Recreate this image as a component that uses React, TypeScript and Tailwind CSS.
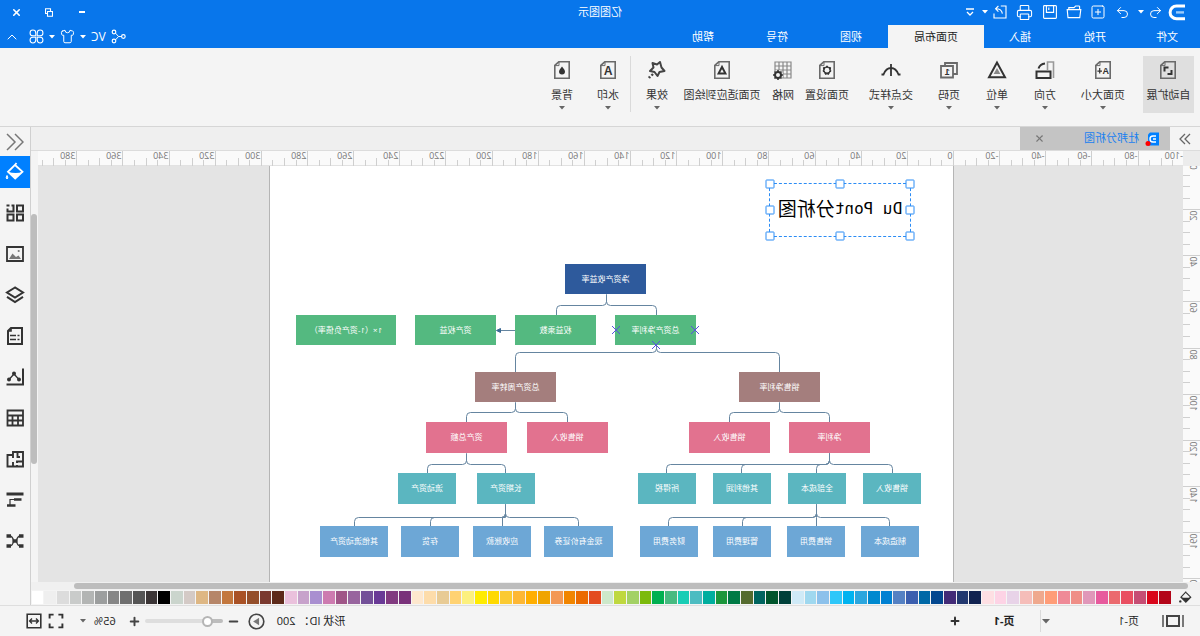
import type { ReactNode } from "react";
import { ChevronUp, Minus, Plus, Printer, Redo2, Shirt, SquarePlus, Undo2, X } from "lucide-react";

type IconProps = { size?: number; className?: string; children: ReactNode };

function Icon({ size = 20, className = "", children }: IconProps) {
  return (
    <svg
      width={size}
      height={size}
      viewBox="0 0 20 20"
      fill="none"
      stroke="currentColor"
      strokeWidth={1.6}
      className={className}
      aria-hidden="true"
    >
      {children}
    </svg>
  );
}

function Caret({ className = "" }: { className?: string }) {
  return (
    <svg width="6" height="4" viewBox="0 0 6 4" className={className} aria-hidden="true">
      <path d="M0 0H6L3 3.6Z" fill="currentColor" />
    </svg>
  );
}

function PageIcon({ children }: { children: ReactNode }) {
  return (
    <Icon className="text-[#6a6a6a]">
      <path d="M2.8 1.8H13.2L17.2 5.4V18.2H2.8Z" />
      <path d="M13 2V5.6H17" strokeWidth={1} />
      <g className="text-[#333]" stroke="currentColor">
        {children}
      </g>
    </Icon>
  );
}

const gear = "M10 5.8L11.4 7.3L13.6 7.6L13.4 9.8L14 11.2L12.4 12.6L11.6 14.4L10 13.8L8.4 14.4L7.6 12.6L6 11.2L6.6 9.8L6.4 7.6L8.6 7.3Z";

type Tool = { label: string; width: string; icon: ReactNode; menu?: boolean; active?: boolean };

const pageTools: Tool[] = [
  {
    label: "自动扩展",
    width: "w-[51px] mr-1.5",
    active: true,
    icon: (
      <PageIcon>
        <path d="M9.5 7.5H13.5V11.5M10.5 14H6.5V10" strokeWidth={2} />
      </PageIcon>
    ),
  },
  {
    label: "页面大小",
    width: "w-[68px]",
    menu: true,
    icon: (
      <PageIcon>
        <text x="4" y="14" fontSize="9" fontWeight="700" fontFamily="Liberation Sans" fill="currentColor" stroke="none">A</text>
        <path d="M13.3 8V13.5M11 11.2H15.6" strokeWidth={1.2} />
      </PageIcon>
    ),
  },
  {
    label: "方向",
    width: "w-12",
    menu: true,
    icon: (
      <Icon className="text-[#333]">
        <path d="M1.5 18V2H7.5V10" className="text-[#999]" stroke="currentColor" />
        <path d="M4.5 11.5H18.5V18H4.5Z" strokeWidth={2} />
        <path d="M10 3.5Q15 4 16.5 8.5" strokeWidth={2} />
      </Icon>
    ),
  },
  {
    label: "单位",
    width: "w-12",
    menu: true,
    icon: (
      <Icon className="text-[#333]">
        <path d="M10 2.5L18 17.3H2Z" strokeWidth={2} />
        <path d="M10 8L13.4 14H6.6Z" fill="#888" stroke="none" />
      </Icon>
    ),
  },
  {
    label: "页码",
    width: "w-12",
    menu: true,
    icon: (
      <Icon className="text-[#6a6a6a]">
        <path d="M6 14H2V3H14V6" strokeWidth={1.8} />
        <path d="M6 6H18V17.5H6Z" strokeWidth={1.8} />
        <text x="9.3" y="15" fontSize="9" fontWeight="700" fontFamily="Liberation Sans" fill="#333" stroke="none">1</text>
      </Icon>
    ),
  },
  {
    label: "交点样式",
    width: "w-[68px]",
    menu: true,
    icon: (
      <Icon className="text-[#333]">
        <path d="M0.5 14.5H2.5Q5 8 10 8Q15 8 17.5 14.5H19.5M10 4V16" strokeWidth={1.8} />
      </Icon>
    ),
  },
  {
    label: "页面设置",
    width: "w-[60px]",
    icon: (
      <PageIcon>
        <path d={gear} fill="currentColor" strokeWidth={1} />
        <circle cx="10" cy="10.2" r="2.4" fill="#f4f4f4" stroke="none" />
      </PageIcon>
    ),
  },
  {
    label: "网格",
    width: "w-7",
    icon: (
      <Icon className="text-[#888]">
        <path d="M2 2H18V18H2ZM2 6H18M2 10H18M2 14H18M6 2V18M10 2V18M14 2V18" strokeWidth={1.2} />
        <circle cx="15" cy="15" r="5" fill="#f4f4f4" stroke="none" />
        <circle cx="15" cy="15" r="3" stroke="#333" strokeWidth={2} />
        <path d="M15 10V12M15 18V20M10 15H12M18 15H20M11.5 11.5L13 13M17 17L18.5 18.5M18.5 11.5L17 13M11.5 18.5L13 17" stroke="#333" strokeWidth={1.6} />
      </Icon>
    ),
  },
  {
    label: "页面适应到绘图",
    width: "w-[94px]",
    icon: (
      <PageIcon>
        <path d="M10 7L13.4 13.4H6.6Z" strokeWidth={2} />
      </PageIcon>
    ),
  },
  {
    label: "效果",
    width: "w-9",
    menu: true,
    icon: (
      <Icon className="text-[#444]">
        <path d="M7 2L10 4.5L14.5 3L13.5 7.5L17 11L12.5 12L9.5 16L7.5 12L2.5 11L5.5 7.5Z" strokeWidth={2} strokeLinejoin="round" />
        <path d="M14 14L15.5 15.5M17 16.5L18 18" strokeWidth={2.4} />
      </Icon>
    ),
  },
];

const backgroundTools: Tool[] = [
  {
    label: "水印",
    width: "w-11",
    menu: true,
    icon: (
      <PageIcon>
        <text x="5.4" y="14.6" fontSize="12" fontWeight="700" fontFamily="Liberation Sans" fill="currentColor" stroke="none">A</text>
      </PageIcon>
    ),
  },
  {
    label: "背景",
    width: "w-12",
    menu: true,
    icon: (
      <PageIcon>
        <path d="M10 6.5Q13 10 13 11.6A3 3 0 0 1 7 11.6Q7 10 10 6.5Z" fill="currentColor" stroke="none" />
      </PageIcon>
    ),
  },
];

function ToolButton({ tool }: { tool: Tool }) {
  return (
    <button
      className={`flex h-[57px] shrink-0 flex-col items-center pt-1 text-[11px] leading-4 whitespace-nowrap text-[#333] ${tool.width} ${
        tool.active ? "bg-[#dfdfdf]" : ""
      }`}
    >
      {tool.icon}
      <span className="mt-[7px]">{tool.label}</span>
      {tool.menu && <Caret className="mt-[3px] shrink-0 text-[#666]" />}
    </button>
  );
}

const menuTabs = [
  { label: "文件", width: "w-[66px]" },
  { label: "开始", width: "w-[78px]" },
  { label: "插入", width: "w-[72px]" },
  { label: "页面布局", width: "w-24", active: true },
  { label: "视图", width: "w-[74px]" },
  { label: "符号", width: "w-[74px]" },
  { label: "帮助", width: "w-[74px]" },
];

function Header() {
  return (
    <header className="shrink-0 bg-[#0876eb] text-[11px] text-white">
      <div className="flex h-[25px] items-center pb-px">
        <div className="flex flex-1 items-center">
          <svg width="20" height="18" viewBox="0 0 20 18" fill="none" className="ml-3.5" aria-hidden="true">
            <path d="M1 3H9.5A6.3 6.3 0 0 1 9.5 15.8H1" stroke="white" strokeWidth="3" />
            <path d="M2 9.4H10" stroke="#9ccbfa" strokeWidth="2.4" />
          </svg>
          <button className="flex h-6 w-5 items-center justify-center" aria-label="撤销">
            <Undo2 size={15} strokeWidth={1.6} />
          </button>
          <Caret className="mx-0.5" />
          <button className="flex h-6 w-[26px] items-center justify-center" aria-label="重做">
            <Redo2 size={15} strokeWidth={1.6} />
          </button>
          <button className="flex h-6 w-6 items-center justify-center" aria-label="新建">
            <SquarePlus size={16} strokeWidth={1.5} />
          </button>
          <button className="flex h-6 w-6 items-center justify-center" aria-label="打开">
            <Icon size={16}>
              <path d="M3 7V3.5Q3 2.5 4 2.5H8L10 4.5H16.5V7M1.5 7H18.5L17.5 17H2.8Z" strokeWidth={1.4} />
            </Icon>
          </button>
          <button className="flex h-6 w-6 items-center justify-center" aria-label="保存">
            <Icon size={16}>
              <path d="M3 2H17Q18 2 18 3V17Q18 18 17 18H3Q2 18 2 17V3Q2 2 3 2ZM5.5 2V10.5H14.5V2M11.5 4.5V7.5" strokeWidth={1.4} />
            </Icon>
          </button>
          <button className="flex h-6 w-[26px] items-center justify-center" aria-label="打印">
            <Printer size={17} strokeWidth={1.5} />
          </button>
          <button className="flex h-6 w-6 items-center justify-center" aria-label="导出">
            <Icon size={16}>
              <path d="M9 2.5H2.5V17.5H17.5V12M7 12Q8 6 15 6M12 2.5L15.5 6L12 9.5" strokeWidth={1.4} />
            </Icon>
          </button>
          <Caret />
          <button className="ml-1 flex h-6 w-4 items-center justify-center" aria-label="更多">
            <svg width="8" height="8" viewBox="0 0 8 8" fill="none" stroke="white" aria-hidden="true">
              <path d="M0 1H8M1 4L4 7L7 4" strokeWidth="1.3" />
            </svg>
          </button>
        </div>
        <h1>亿图图示</h1>
        <div className="flex flex-1 items-center justify-end">
          <button className="flex h-6 w-[33px] items-center justify-center" aria-label="最小化">
            <svg width="6" height="2" aria-hidden="true">
              <path d="M0 1H6" stroke="white" strokeWidth="2" />
            </svg>
          </button>
          <button className="flex h-6 w-[33px] items-center justify-center" aria-label="还原">
            <svg width="8" height="9" viewBox="0 0 8 9" fill="none" stroke="white" aria-hidden="true">
              <path d="M2.5 3V0.7H7.5V5.5H5.5M0.5 3.5H5.5V8.3H0.5Z" strokeWidth="1.1" />
            </svg>
          </button>
          <button className="flex h-6 w-[33px] items-center justify-center" aria-label="关闭">
            <X size={11} strokeWidth={3.5} />
          </button>
        </div>
      </div>
      <div className="flex h-[23px] items-center">
        <nav className="flex h-full flex-1">
          {menuTabs.map((tab) => (
            <button
              key={tab.label}
              className={`h-full pt-0.5 ${tab.width} ${tab.active ? "bg-[#f4f4f4] text-[#222]" : "text-white"}`}
            >
              {tab.label}
            </button>
          ))}
        </nav>
        <div className="flex h-full items-center gap-[5px] pr-1">
          <button aria-label="分享">
            <Icon size={15}>
              <circle cx="3.5" cy="10" r="2.4" />
              <circle cx="16" cy="4" r="2.4" />
              <circle cx="16" cy="16" r="2.4" />
              <path d="M6 10H10L14 5.5M10 10L14 14.5" strokeWidth={1.3} />
            </Icon>
          </button>
          <button className="text-xs">VC</button>
          <Caret />
          <button aria-label="皮肤">
            <Shirt size={15} strokeWidth={1.6} />
          </button>
          <Caret />
          <button aria-label="应用">
            <Icon size={15}>
              <path
                d="M9 9H5.2A3.8 3.8 0 1 1 9 5.2ZM11 9V5.2A3.8 3.8 0 1 1 14.8 9ZM9 11V14.8A3.8 3.8 0 1 1 5.2 11ZM11 11H14.8A3.8 3.8 0 1 1 11 14.8Z"
                strokeWidth={1.4}
              />
            </Icon>
          </button>
          <button className="ml-1" aria-label="收起">
            <ChevronUp size={16} strokeWidth={1.5} />
          </button>
        </div>
      </div>
    </header>
  );
}

const majorStep = 46.14; // pixels per 20 mm at 65% zoom

function HorizontalRuler() {
  const ticks = Array.from({ length: 99 }, (_, i) => i - 19);
  return (
    <svg className="h-[15px] min-w-0 flex-1 overflow-visible bg-[#fafafa]" aria-hidden="true">
      <line x1="0" y1="14.5" x2="100%" y2="14.5" stroke="#e2e2e2" />
      <text x="0" y="8" fontSize="9" fill="#777">
        -100
      </text>
      {ticks.map((t) => {
        const x = Math.round(229 + (t * majorStep) / 4) + 0.5;
        const major = t % 4 === 0;
        return (
          <g key={t}>
            <path d={`M${x} ${major ? 0 : t % 2 === 0 ? 7 : 9}V15`} stroke="#cfcfcf" />
            {major && (
              <text x={x + 1} y="8" fontSize="9" fill="#777">
                {t * 5}
              </text>
            )}
          </g>
        );
      })}
    </svg>
  );
}

function VerticalRuler() {
  const ticks = Array.from({ length: 37 }, (_, i) => i);
  return (
    <svg className="h-full w-[17px] shrink-0 bg-[#fafafa]" aria-hidden="true">
      {ticks.map((t) => {
        const y = Math.round(-3 + (t * majorStep) / 4) + 0.5;
        const major = t % 4 === 0;
        return (
          <g key={t}>
            <path d={`M${major ? 0 : 10} ${y}H17`} stroke="#cfcfcf" />
            {major && (
              <text
                x="10"
                y={y + 1}
                fontSize="9"
                fill="#777"
                textAnchor="end"
                transform={`rotate(-90 10 ${y + 1})`}
              >
                {t * 5}
              </text>
            )}
          </g>
        );
      })}
    </svg>
  );
}

type DiagramNode = { text: string; x: number; y: number; w: number; h: number; color: string };

const row = (
  y: number,
  w: number,
  h: number,
  color: string,
  items: [string, number, number?][],
): DiagramNode[] => items.map(([text, x, width]) => ({ text, x, y, w: width ?? w, h, color }));

const nodes: DiagramNode[] = [
  ...row(98, 81, 30, "#2e5a9c", [["净资产收益率", 307]]),
  ...row(149, 81, 30, "#54b980", [
    ["总资产净利率", 257],
    ["权益乘数", 357],
    ["资产权益", 457],
    ["1×（1-资产负债率）", 557, 100],
  ]),
  ...row(206, 81, 30, "#a47e7d", [
    ["销售净利率", 133],
    ["总资产周转率", 397],
  ]),
  ...row(256, 81, 31, "#e2728f", [
    ["净利率", 83],
    ["销售收入", 183],
    ["销售收入", 345],
    ["资产总额", 446],
  ]),
  ...row(307, 58, 31, "#5bb6c0", [
    ["销售收入", 32],
    ["全部成本", 107],
    ["其他利润", 182],
    ["所得税", 257],
    ["长期资产", 418],
    ["流动资产", 497],
  ]),
  ...row(360, 58, 31, "#6da7d6", [
    ["制造成本", 34],
    ["销售费用", 108],
    ["管理费用", 182],
    ["财务费用", 255],
    ["现金有价证券", 340, 69],
    ["应收账款", 422],
    ["存货", 494],
    ["其他流动资产", 565, 68],
  ]),
];

// [parent x, parent bottom, line y, child top, child xs]
const branches: [number, number, number, number, number[]][] = [
  [347, 128, 139, 149, [297, 397]],
  [297, 179, 186, 206, [174, 438]],
  [174, 236, 246, 256, [124, 224]],
  [438, 236, 246, 256, [386, 487]],
  [124, 287, 298, 307, [61, 137, 212, 287]],
  [487, 287, 298, 307, [448, 526]],
  [137, 338, 351, 360, [64, 137, 211, 285]],
  [448, 338, 351, 360, [375, 451, 523, 599]],
];

function branchPath(x: number, y0: number, mid: number, y1: number, cx: number) {
  if (Math.abs(cx - x) < 8) return `M${x} ${y0}V${mid}L${cx} ${mid}V${y1}`;
  const dir = cx > x ? 1 : -1;
  return `M${x} ${y0}V${mid - 4}Q${x} ${mid} ${x + 4 * dir} ${mid}H${cx - 4 * dir}Q${cx} ${mid} ${cx} ${mid + 4}V${y1}`;
}

const handles: [number, number][] = [
  [0, 0],
  [50, 0],
  [100, 0],
  [0, 50],
  [100, 50],
  [0, 100],
  [50, 100],
  [100, 100],
];

function DrawingPage() {
  return (
    <div className="relative ml-[229px] h-full w-[685px] shrink-0 overflow-hidden border-x border-[#b5b5b5] bg-white">
      <svg className="absolute inset-0 h-full w-full" fill="none" stroke="#6585a0" aria-hidden="true">
        <g transform="translate(-0.5 0.5)">
          {branches.map(([x, y0, mid, y1, children]) =>
            children.map((cx) => <path key={`${x}-${y0}-${cx}`} d={branchPath(x, y0, mid, y1, cx)} />),
          )}
          <path d="M438 164H454" />
          <path d="M453 162L457 164L453 166Z" fill="#3c6a94" stroke="#3c6a94" />
        </g>
      </svg>
      {nodes.map((n) => (
        <div
          key={`${n.x}-${n.y}`}
          className="absolute flex items-center justify-center pb-px text-[8px] leading-none whitespace-nowrap text-white"
          style={{ left: n.x, top: n.y, width: n.w, height: n.h, backgroundColor: n.color }}
        >
          {n.text}
        </div>
      ))}
      <svg className="absolute inset-0 h-full w-full" stroke="#5a50e0" aria-hidden="true">
        {[
          [258, 164],
          [337, 164],
          [297, 179],
        ].map(([x, y]) => (
          <path key={x} d={`M${x - 4} ${y - 4}l8 8m0 -8l-8 8`} />
        ))}
      </svg>
      <div className="absolute top-[17px] left-[42px] flex h-[54px] w-[142px] items-center justify-center border border-dashed border-[#2b8cf5] pb-0.5 text-[19px] leading-none whitespace-nowrap text-black">
        <span className="font-['DejaVu_Sans_Mono','Noto_Sans_CJK_SC',monospace] text-base leading-none">Du Pont</span>
        <span>分析图</span>
        {handles.map(([x, y]) => (
          <span
            key={`${x}-${y}`}
            className="absolute h-[9px] w-[9px] -translate-x-1/2 -translate-y-1/2 rounded-[1px] border border-[#2b8cf5] bg-white"
            style={{ left: `${x}%`, top: `${y}%` }}
          />
        ))}
      </div>
    </div>
  );
}

const palette = [
  "#b30518", "#d9061b", "#c64e74", "#e94f61", "#eb6a6e", "#e75a9d", "#e097b9", "#ef8e87", "#ef8a97", "#ff9d78",
  "#efa98e", "#f5bdb9", "#e8d3e8", "#fdd3e5", "#fedfe3", "#102250", "#22386f", "#432b77", "#03478f", "#0068a6",
  "#3b5eae", "#5581c3", "#0080d2", "#0089cf", "#2ba6de", "#00b3f0", "#2ec7f9", "#8cc1eb", "#9fd8ef", "#cfeaf7",
  "#00403a", "#00552c", "#00645f", "#556b2f", "#007a45", "#1b963b", "#00ae9e", "#4dbcc1", "#19cdb5", "#47ba80",
  "#00b051", "#7cba0c", "#a3d165", "#bfd83f", "#cde8ca", "#e34c20", "#eb6a00", "#f18500", "#f39855", "#f0a400",
  "#ffae00", "#fdb735", "#fbca32", "#ffd900", "#ffeb00", "#fcf07e", "#ffd272", "#e8cb95", "#fddcaa", "#fee8ce",
  "#79317a", "#813a80", "#693a96", "#735098", "#98659e", "#a05688", "#cd7bb0", "#a98fd0", "#c7a2cb", "#eac1dc",
  "#5d2a1a", "#7a392f", "#944f2b", "#a95226", "#c3773d", "#b68669", "#deb784", "#d4cac6", "#cbd5cd", "#000000",
  "#3b3536", "#555555", "#6f6f6f", "#868686", "#9c9e9e", "#b3b5b4", "#c9cbca", "#dcdcdc", "#efefef", "#ffffff",
];

function Bucket({ size }: { size: number }) {
  return (
    <Icon size={size}>
      <path d="M9 1L17 9.5L9.5 17L2 9.5L9 2.5" strokeWidth={1.8} />
      <path d="M2 9.5Q9 11.5 17 9.5L9.5 17Z" fill="currentColor" stroke="none" />
      <circle cx="18" cy="16" r="1.8" fill="currentColor" stroke="none" />
    </Icon>
  );
}

const sidePanels: { label: string; icon: ReactNode }[] = [
  {
    label: "填充",
    icon: (
      <Icon>
        <path d="M8.5 1L10 3L17 9.8L9.8 16.5L2.5 9.8L10 3" strokeWidth={1.8} />
        <path d="M2.5 10Q9 12 17 10L9.8 17Z" fill="currentColor" stroke="none" />
        <path d="M18 13.5Q19.5 16 18 17Q16.5 16 18 13.5Z" fill="currentColor" strokeWidth={1} />
      </Icon>
    ),
  },
  {
    label: "符号库",
    icon: (
      <Icon>
        <path d="M2 2.5H8V8.5H2ZM2 11.5H8V17.5H2ZM11.5 11.5H17.5V17.5H11.5ZM13.5 2.5H11.5V8.5H17.5V5.5" strokeWidth={2} />
        <path d="M15.5 2.5H18.5" strokeWidth={2} />
      </Icon>
    ),
  },
  {
    label: "图片",
    icon: (
      <Icon>
        <path d="M2 3H18V17H2Z" strokeWidth={1.8} />
        <path d="M4 15L6.5 11.5L9 13L12.5 9.5L16 15Z" fill="#777" stroke="none" />
        <circle cx="6.3" cy="7" r="1.1" fill="#777" stroke="none" />
      </Icon>
    ),
  },
  {
    label: "图层",
    icon: (
      <Icon>
        <path d="M10 2.5L18 7.5L10 12.5L2 7.5ZM2 11.8L10 17L18 11.8" strokeWidth={2} />
      </Icon>
    ),
  },
  {
    label: "属性",
    icon: (
      <Icon>
        <path d="M3 2H14L17 5V18H3Z" strokeWidth={2} />
        <path d="M5.5 9.5H7.5M9 9.5H15M5.5 13.5H7.5M9 13.5H15M14 2V5H17" strokeWidth={1.6} />
      </Icon>
    ),
  },
  {
    label: "图表",
    icon: (
      <Icon>
        <path d="M2 1.5V17.5H18.5" strokeWidth={2} />
        <path d="M6 12.5L11 7L16 12.5" strokeWidth={1.3} />
        <g fill="currentColor" stroke="none">
          <circle cx="6" cy="12.5" r="2" />
          <circle cx="11" cy="6.5" r="2" />
          <circle cx="16" cy="12.5" r="2" />
        </g>
      </Icon>
    ),
  },
  {
    label: "表格",
    icon: (
      <Icon>
        <path d="M2 2.5H17.5V17.5H2ZM2 7.5H17.5M2 12.5H17.5M7 7.5V17.5M12.5 7.5V17.5" strokeWidth={1.8} />
      </Icon>
    ),
  },
  {
    label: "平面图",
    icon: (
      <Icon>
        <path d="M2 3H12V6H17.5V17.5H2ZM7.5 3V8H5M2 12.5H8V14M8 17.5V16M12 17.5V13M12 6V9" strokeWidth={1.9} />
      </Icon>
    ),
  },
  {
    label: "时间线",
    icon: (
      <Icon>
        <path d="M1.5 4H18.5" strokeWidth={3} />
        <path d="M3.5 9.5H11M9.5 15.5H18" strokeWidth={2.6} />
        <path d="M11 9.5H15V15" strokeWidth={1.2} />
      </Icon>
    ),
  },
  {
    label: "思维导图",
    icon: (
      <Icon>
        <path d="M4 5Q8 5 8.5 10Q8 15 4 15M16 5Q12 5 11.5 10Q12 15 16 15" strokeWidth={1.3} />
        <path d="M1.5 5H6M14 5H18.5M1.5 15H6M14 15H18.5M7.5 10H12.5" strokeWidth={3.4} />
      </Icon>
    ),
  },
];

function SidePanel() {
  return (
    <aside className="flex w-[30px] shrink-0 flex-col bg-[#f4f4f4] text-[#333]">
      <button className="flex h-[29px] items-center justify-center text-[#777]" aria-label="展开面板">
        <svg width="18" height="18" viewBox="0 0 18 18" fill="none" stroke="currentColor" aria-hidden="true">
          <path d="M9 1L1 9L9 17M17 1L9 9L17 17" strokeWidth="1.5" />
        </svg>
      </button>
      <div className="flex flex-col gap-[9px]">
        {sidePanels.map((panel, i) => (
          <button
            key={panel.label}
            aria-label={panel.label}
            className={`flex h-8 items-center justify-center ${i === 0 ? "bg-[#0080ff] text-white" : ""}`}
          >
            {panel.icon}
          </button>
        ))}
      </div>
    </aside>
  );
}

function Workspace() {
  return (
    <section className="flex min-w-0 flex-1 flex-col border-r border-[#d0d0d0]">
      <div className="flex h-[23px] shrink-0 bg-[#efefef]">
        <button className="flex w-[30px] items-center justify-center bg-[#f4f4f4] text-[#666]" aria-label="展开符号库">
          <svg width="12" height="12" viewBox="0 0 12 12" fill="none" stroke="currentColor" aria-hidden="true">
            <path d="M1 1L6 6L1 11M6 1L11 6L6 11" strokeWidth="1.3" />
          </svg>
        </button>
        <div className="flex w-[150px] items-center bg-[#c4c4c4] pl-[11px] text-[11px] text-[#1980f0]">
          <svg width="14" height="14" viewBox="0 0 14 14" fill="none" aria-hidden="true">
            <path d="M0 0.5H9L11 2.5V13.5H0Z" fill="#0080ff" />
            <path d="M3 4H6A3 3 0 0 1 6 10H3M3 7H6" stroke="white" strokeWidth="1.4" />
            <circle cx="11" cy="11.5" r="2.5" fill="red" />
          </svg>
          <span className="ml-1.5">杜邦分析图</span>
          <button className="ml-auto flex w-10 items-center justify-center text-[#777]" aria-label="关闭文档">
            <X size={11} strokeWidth={2.4} />
          </button>
        </div>
      </div>
      <div className="flex shrink-0 border-t border-[#dcdcdc]">
        <div className="w-[17px] bg-[#ececec]" />
        <HorizontalRuler />
        <div className="w-[7px] bg-[#f4f4f4]" />
      </div>
      <div className="flex min-h-0 flex-1">
        <VerticalRuler />
        <div className="flex min-w-0 flex-1 overflow-hidden bg-[#e4e4e4]">
          <DrawingPage />
        </div>
        <div className="w-[7px] shrink-0 bg-[#f4f4f4] pt-12">
          <div className="ml-px h-[68%] w-1.5 rounded-full bg-[#bdbdbd]" />
        </div>
      </div>
      <div className="flex h-2 shrink-0 items-center bg-[#f0f0f0] pr-[43px] pl-3">
        <div className="h-1.5 flex-1 rounded-full bg-[#bdbdbd]" />
      </div>
      <div className="flex h-[15px] shrink-0 bg-[#f4f4f4] py-px">
        <button className="flex w-[29px] items-center justify-center text-[#333]" aria-label="填充颜色">
          <Bucket size={13} />
        </button>
        {palette.map((color) => (
          <button
            key={color}
            aria-label={color}
            className="flex-1 border-r border-[#f4f4f4]"
            style={{ backgroundColor: color }}
          />
        ))}
      </div>
    </section>
  );
}

function StatusBar() {
  return (
    <footer className="flex h-[31px] shrink-0 items-center border-t border-[#dedede] bg-[#f4f4f4] text-[11px] text-[#222]">
      <button className="ml-4 text-[#444]" aria-label="页面视图">
        <svg width="22" height="14" viewBox="0 0 22 14" fill="none" stroke="currentColor" aria-hidden="true">
          <path d="M5 2H17V12H5Z" strokeWidth="2" />
          <path d="M1 1V13M21 1V13" strokeWidth="1.4" />
        </svg>
      </button>
      <button className="ml-[22px] w-[23px] whitespace-nowrap">页-1</button>
      <svg width="8" height="5" viewBox="0 0 8 5" className="ml-[67px] text-[#666]" aria-hidden="true">
        <path d="M0 0H8L4 4.6Z" fill="currentColor" />
      </svg>
      <div className="ml-px h-[22px] w-px bg-[#dadada]" />
      <button className="ml-6 w-6 font-bold whitespace-nowrap">页-1</button>
      <button className="ml-[31px] text-[#333]" aria-label="添加页面">
        <Plus size={12} strokeWidth={4} />
      </button>
      <div className="ml-auto flex items-center pr-[26px]">
        <span className="whitespace-nowrap">形状 ID： 200</span>
        <button className="ml-3 text-[#444]" aria-label="播放">
          <Icon size={17}>
            <circle cx="10" cy="10" r="8.6" strokeWidth={1.9} />
            <path d="M7 5.5L14 10L7 14.5Z" fill="#777" stroke="none" />
          </Icon>
        </button>
        <button className="ml-2 text-[#444]" aria-label="缩小">
          <Minus size={13} strokeWidth={3.6} />
        </button>
        <input
          type="range"
          aria-label="缩放"
          defaultValue={14}
          className="ml-1 h-1 w-[78px] appearance-none rounded-full bg-[linear-gradient(90deg,#bdbdbd_18%,#dedede_18%)] [&::-webkit-slider-thumb]:h-[11px] [&::-webkit-slider-thumb]:w-[11px] [&::-webkit-slider-thumb]:appearance-none [&::-webkit-slider-thumb]:rounded-full [&::-webkit-slider-thumb]:border-2 [&::-webkit-slider-thumb]:border-[#b5b5b5] [&::-webkit-slider-thumb]:bg-white"
        />
        <button className="ml-1 text-[#444]" aria-label="放大">
          <Plus size={13} strokeWidth={3.6} />
        </button>
        <span className="ml-3">65%</span>
        <Caret className="ml-2 text-[#666]" />
        <button className="ml-4 text-[#333]" aria-label="全屏">
          <Icon size={16}>
            <path d="M2 7V2H7M13 2H18V7M18 13V18H13M7 18H2V13" strokeWidth={2.4} />
          </Icon>
        </button>
        <button className="ml-1.5 text-[#333]" aria-label="适应宽度">
          <Icon size={16}>
            <path d="M1.5 1.5H18.5V18.5H1.5Z" strokeWidth={2} />
            <path d="M5 10H15M7.5 7L4.5 10L7.5 13M12.5 7L15.5 10L12.5 13" strokeWidth={1.7} />
          </Icon>
        </button>
      </div>
    </footer>
  );
}

export default function App() {
  return (
    <div className="flex h-screen -scale-x-100 flex-col overflow-hidden bg-[#f4f4f4] font-['Open_Sans','Noto_Sans_CJK_SC',sans-serif]">
      <Header />
      <div className="flex h-[79px] shrink-0 items-start border-b border-[#d6d6d6] bg-[#f4f4f4] pt-2 pl-1.5">
        {pageTools.map((tool) => (
          <ToolButton key={tool.label} tool={tool} />
        ))}
        <div className="ml-2 h-14 w-px bg-[#dadada]" />
        {backgroundTools.map((tool) => (
          <ToolButton key={tool.label} tool={tool} />
        ))}
      </div>
      <main className="flex min-h-0 flex-1">
        <Workspace />
        <SidePanel />
      </main>
      <StatusBar />
    </div>
  );
}
